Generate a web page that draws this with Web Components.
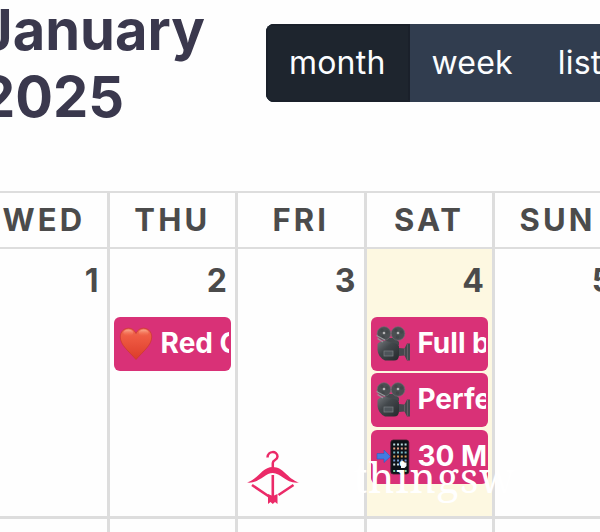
<!DOCTYPE html>
<html lang="en">
<head>
<meta charset="utf-8">
<title>Calendar</title>
<style>
    body {
        margin: 0;
        width: 600px;
        height: 532px;
        overflow: hidden;
        background: #fefefe;
        font-family: Inter, "Liberation Sans", sans-serif;
    }
</style>
</head>
<body>
<calendar-app>
    <calendar-toolbar slot="toolbar">
        <span slot="title">January 2025</span>
        <view-button active>month</view-button>
        <view-button>week</view-button>
        <view-button>list</view-button>
    </calendar-toolbar>
    <calendar-grid slot="grid">
        <day-header>WED</day-header>
        <day-header>THU</day-header>
        <day-header>FRI</day-header>
        <day-header>SAT</day-header>
        <day-header>SUN</day-header>
        <day-cell date="1"></day-cell>
        <day-cell date="2">
            <calendar-event icon="heart">Red Carpet</calendar-event>
        </day-cell>
        <day-cell date="3"></day-cell>
        <day-cell date="4" today>
            <calendar-event icon="camera">Full body</calendar-event>
            <calendar-event icon="camera">Perfect</calendar-event>
            <calendar-event icon="phone">30 Minutes</calendar-event>
        </day-cell>
        <day-cell date="5"></day-cell>
        <day-cell></day-cell>
        <day-cell></day-cell>
        <day-cell></day-cell>
        <day-cell></day-cell>
        <day-cell></day-cell>
    </calendar-grid>
    <brand-mark slot="brand">thingsw</brand-mark>
</calendar-app>

<script>
const ICONS = {
    heart: `
        <svg viewBox="0 0 34 36" width="34" height="36">
            <defs>
                <linearGradient id="red" x1="0" y1="0" x2="0" y2="1">
                    <stop offset="0" stop-color="#ee6a50"/>
                    <stop offset=".3" stop-color="#ee5a42"/>
                    <stop offset="1" stop-color="#dc3c2a"/>
                </linearGradient>
                <linearGradient id="shine" x1="0" y1="0" x2="0" y2="1">
                    <stop offset="0" stop-color="#ffc9ac" stop-opacity=".7"/>
                    <stop offset="1" stop-color="#ff7552" stop-opacity="0"/>
                </linearGradient>
            </defs>
            <path d="M17 7.500C15.500 4 12.800 2.200 9.600 2.200C4.800 2.200 1.300 5.800 1.300 11C1.300 19 9.500 25 17 33.500C24.500 25 32.700 19 32.700 11C32.700 5.800 29.200 2.200 24.400 2.200C21.200 2.200 18.500 4 17 7.500Z" fill="url(#red)" stroke="#c93a2c" stroke-width=".7"/>
            <ellipse cx="9.300" cy="6.800" rx="5" ry="3.300" fill="url(#shine)"/>
            <ellipse cx="24.700" cy="6.800" rx="5" ry="3.300" fill="url(#shine)"/>
        </svg>`,
    camera: `
        <svg viewBox="0 0 34 36" width="34" height="36">
            <defs>
                <linearGradient id="body" x1="0" y1="0" x2="1" y2="1">
                    <stop offset="0" stop-color="#73777b"/>
                    <stop offset=".4" stop-color="#42474b"/>
                    <stop offset="1" stop-color="#25292c"/>
                </linearGradient>
            </defs>
            <path d="M9 12L19 12L23 16L23 19L10 18Z" fill="#45494d"/>
            <g fill="#4b4f52" stroke="#6b6f72" stroke-width=".7">
                <circle cx="8" cy="7.500" r="6.800"/>
                <circle cx="22" cy="7.500" r="6.800"/>
            </g>
            <g fill="#43474a">
                <circle cx="6" cy="4.500" r="1.700"/><circle cx="11" cy="6" r="1.700"/><circle cx="7" cy="11" r="1.700"/>
                <circle cx="20" cy="4.500" r="1.700"/><circle cx="25.500" cy="6" r="1.700"/><circle cx="21.500" cy="11" r="1.700"/>
            </g>
            <g fill="#b4b3b4"><circle cx="8" cy="7" r="1.300"/><circle cx="22" cy="7" r="1.300"/></g>
            <path d="M1.500 18Q4 14.500 10 15L20 17.500Q23 18.500 23 21V29Q23 34.500 18 34.500H9Q2 31 1.500 24Z" fill="url(#body)"/>
            <path d="M.5 9.500L9 14M1.500 12.500L7 16" stroke="#96979b" stroke-width="1.200"/>
            <path d="M23 22L28.500 22.500L31 17.500H34V34.500H31L28.500 29.500L23 30Z" fill="#45484d"/>
            <path d="M28.500 22.500V29.500M31.500 18V34" stroke="#69666c" stroke-width=".8"/>
            <rect x="8" y="25" width="9" height="5" fill="#4d5459" stroke="#7b8085" stroke-width=".7"/>
        </svg>`,
    phone: `
        <svg viewBox="0 0 34 36" width="34" height="36">
            <path d="M1 14.500H8V11L14.500 17.500L8 23.500V20H1Z" fill="#427be0" stroke="#2d5ac0" stroke-width=".6"/>
            <rect x="14.800" y="1" width="18" height="34" rx="2.500" fill="#0d1218" stroke="#3b2029" stroke-width=".8"/>
            <g stroke-width="2" stroke-dasharray="2 1.800">
                <path d="M17.200 5.500H31" stroke="#b9d8dc"/>
                <path d="M17.200 9.500H31" stroke="#e3a38b"/>
                <path d="M17.200 13.500H31" stroke="#78b7c3"/>
                <path d="M17.200 17.500H31" stroke="#d6a05e"/>
                <path d="M17.200 21.500H31" stroke="#7395ce"/>
                <path d="M17.200 25.500H24" stroke="#d1dddd"/>
                <path d="M17.200 32H31" stroke="#78d39d"/>
            </g>
            <path d="M25 23.500H30.500V27L28.500 29H25Z" fill="#f4f6f6"/>
        </svg>`
};

class CalendarApp extends HTMLElement {
    constructor() {
        super();
        this.attachShadow({ mode: 'open' });
        this.shadowRoot.innerHTML = `
            <style>
                :host {
                    display: flex;
                    flex-direction: column;
                    position: relative;
                    width: 600px;
                    height: 532px;
                    overflow: hidden;
                }
            </style>
            <slot name="toolbar"></slot>
            <slot name="grid"></slot>
            <slot name="brand"></slot>
        `;
    }
}

class CalendarToolbar extends HTMLElement {
    constructor() {
        super();
        this.attachShadow({ mode: 'open' });
        this.shadowRoot.innerHTML = `
            <style>
                :host {
                    display: flex;
                    flex: none;
                    height: 191px;
                    align-items: flex-start;
                }

                h2 {
                    flex: none;
                    box-sizing: border-box;
                    width: 286px;
                    margin: -3px 0 0 -20px;
                    padding-right: 60px;
                    font-size: 56px;
                    line-height: 67.2px;
                    font-weight: 700;
                    color: #3a384d;
                }

                .views {
                    display: flex;
                    flex: none;
                    height: 78px;
                    margin-top: 24px;
                    border-radius: 8px 0 0 8px;
                    overflow: hidden;
                    background: #313d4f;
                }
            </style>
            <h2><slot name="title"></slot></h2>
            <div class="views"><slot></slot></div>
        `;
    }
}

class ViewButton extends HTMLElement {
    constructor() {
        super();
        this.attachShadow({ mode: 'open' });
        this.shadowRoot.innerHTML = `
            <style>
                :host {
                    display: flex;
                    box-sizing: border-box;
                    align-items: center;
                    padding: 0 23px 2px 22px;
                    font-size: 32px;
                    letter-spacing: 0.2px;
                    color: #fbfdff;
                }

                :host([active]) {
                    padding: 0 22px 2px 21px;
                    background: #1e252e;
                    border: 2px solid #1a202a;
                }
            </style>
            <slot></slot>
        `;
    }
}

class CalendarGrid extends HTMLElement {
    constructor() {
        super();
        this.attachShadow({ mode: 'open' });
        this.shadowRoot.innerHTML = `
            <style>
                :host {
                    display: grid;
                    flex: none;
                    grid-template-columns: repeat(5, 128.4px);
                    grid-template-rows: 55.5px 270.5px 60px;
                    width: 642px;
                    margin-left: -18.3px;
                    border-top: 2px solid #ddd;
                }
            </style>
            <slot></slot>
        `;
    }
}

class DayHeader extends HTMLElement {
    constructor() {
        super();
        this.attachShadow({ mode: 'open' });
        this.shadowRoot.innerHTML = `
            <style>
                :host {
                    display: flex;
                    box-sizing: border-box;
                    align-items: center;
                    justify-content: center;
                    border-right: 3px solid #ddd;
                    border-bottom: 2px solid #ddd;
                    padding-right: 1px;
                    font-size: 31px;
                    font-weight: 700;
                    letter-spacing: 3.1px;
                    color: #4b4b4b;
                }
            </style>
            <slot></slot>
        `;
    }
}

class DayCell extends HTMLElement {
    constructor() {
        super();
        this.attachShadow({ mode: 'open' });
    }

    connectedCallback() {
        this.shadowRoot.innerHTML = `
            <style>
                :host {
                    display: flex;
                    flex-direction: column;
                    box-sizing: border-box;
                    gap: 2.5px;
                    min-width: 0;
                    padding: 12px 4px 0;
                    border-right: 3px solid #ddd;
                    border-bottom: 3px solid #ddd;
                }

                :host([today]) {
                    background: #fdf8e1;
                }

                .date {
                    height: 53.5px;
                    padding-right: 4.5px;
                    font-size: 32px;
                    line-height: 40px;
                    font-weight: 700;
                    text-align: right;
                    color: #4b4b4b;
                }
            </style>
            <div class="date">${this.getAttribute('date') || ''}</div>
            <slot></slot>
        `;
    }
}

class CalendarEvent extends HTMLElement {
    constructor() {
        super();
        this.attachShadow({ mode: 'open' });
    }

    connectedCallback() {
        this.shadowRoot.innerHTML = `
            <style>
                :host {
                    display: flex;
                    flex: none;
                    box-sizing: border-box;
                    align-items: center;
                    height: 54px;
                    padding: 0 2px 0 5px;
                    border-radius: 6px;
                    background: #d93177;
                    color: #fff;
                    font-size: 28px;
                    font-weight: 700;
                }

                svg {
                    display: block;
                    flex: none;
                }

                .title {
                    flex: 1;
                    min-width: 0;
                    margin: -2px 0 0 7.5px;
                    overflow: hidden;
                    white-space: nowrap;
                }
            </style>
            ${ICONS[this.getAttribute('icon')]}
            <div class="title"><slot></slot></div>
        `;
    }
}

// Logo and wordmark laid over the calendar
class BrandMark extends HTMLElement {
    constructor() {
        super();
        this.attachShadow({ mode: 'open' });
        this.shadowRoot.innerHTML = `
            <style>
                :host {
                    display: flex;
                    position: absolute;
                    left: 246px;
                    top: 450px;
                    color: #fff;
                    font-family: "Noto Serif", "DejaVu Serif", serif;
                    font-size: 41px;
                    line-height: 54px;
                    letter-spacing: 1px;
                }

                svg {
                    flex: none;
                    margin-right: 53px;
                }
            </style>
            <svg viewBox="0 0 54 56" width="54" height="56">
                <path d="M21.500 7.500C21.500 0.500 31.500 0.500 31.500 6.500C31.500 10.500 26.800 9.500 26.800 13V18" fill="none" stroke="#eb2a68" stroke-width="2.500"/>
                <path d="M1 32.500C13 28.500 16 17 26.800 17C37.500 17 41 28.500 53 32.500C40 34 35 23 26.800 23C18.500 23 13 34 1 32.500Z" fill="#eb2a68"/>
                <path d="M26.800 25V47M6 35L23 46.500M47.500 35L32.500 45" fill="none" stroke="#eb2a68" stroke-width="2.600"/>
                <path d="M22 44L26.800 46L31.500 44V54L29 52L26.800 54L24.500 52L22 54Z" fill="#eb2a68"/>
            </svg>
            <slot></slot>
        `;
    }
}

customElements.define('calendar-app', CalendarApp);
customElements.define('calendar-toolbar', CalendarToolbar);
customElements.define('view-button', ViewButton);
customElements.define('calendar-grid', CalendarGrid);
customElements.define('day-header', DayHeader);
customElements.define('day-cell', DayCell);
customElements.define('calendar-event', CalendarEvent);
customElements.define('brand-mark', BrandMark);
</script>
</body>
</html>
